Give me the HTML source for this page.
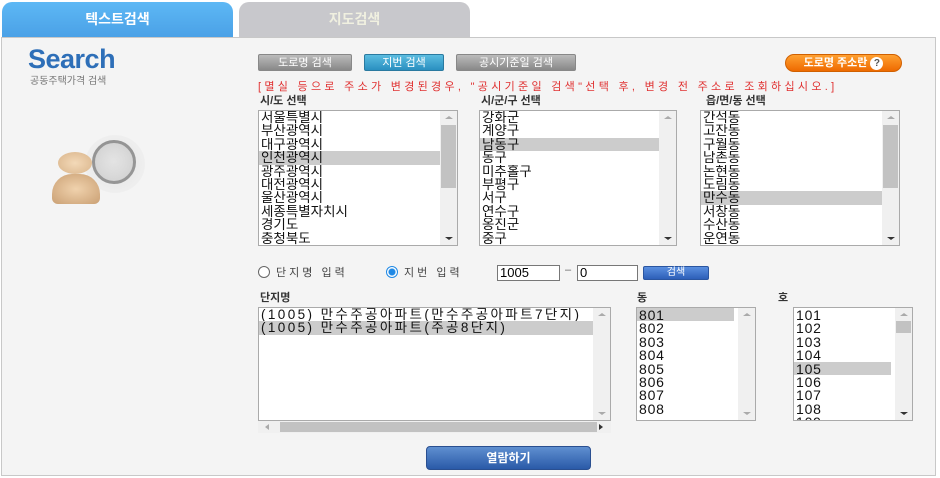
<!DOCTYPE html>
<html><head><meta charset="utf-8"><style>
*{margin:0;padding:0;box-sizing:border-box}
body{width:940px;height:478px;background:#fff;font-family:"Liberation Sans","Noto Sans CJK KR",sans-serif;position:relative;overflow:hidden}
.a{position:absolute}
.tab{position:absolute;top:2px;height:36px;border-radius:10px 10px 0 0;color:#fff;font-weight:bold;font-size:14px;text-align:center;line-height:34px}
.panel{position:absolute;left:1px;top:37px;width:935px;height:439px;background:#f4f4f4;border:1px solid #c8c8c8}
.btn{position:absolute;height:17px;font-size:11px;color:#fff;text-align:center;line-height:16px;border-radius:2px;border:1px solid #888}
.lab{position:absolute;font-size:11px;font-weight:bold;color:#333;line-height:12px}
.list{position:absolute;background:#fff;border:1px solid #aaa;overflow:hidden;font-size:13.5px;color:#111}
.list div.r{height:13.4px;line-height:14px;padding-left:2px;white-space:nowrap;overflow:hidden}
.list .s{background:#ccc}
.num{font-size:14px;letter-spacing:0.8px}
.sb{position:absolute;right:0;top:0;bottom:0;width:17px;background:#f0f0f0}
.th{position:absolute;left:1px;right:1px;background:#c2c2c2}
.up,.dn{position:absolute;left:5px;width:0;height:0;border-left:4px solid transparent;border-right:4px solid transparent}
.up{top:5px;border-bottom:3px solid #aaa}
.dn{bottom:5px;border-top:3px solid #aaa}
</style></head><body>
<div class="tab" style="left:2px;width:231px;background:linear-gradient(#5db8f5,#4aa0e6)">텍스트검색</div>
<div class="tab" style="left:239px;width:231px;background:#c8c8cc;color:#f0f0e0">지도검색</div>
<div class="panel"></div>
<div class="a" style="left:28px;top:44px;font-size:27px;font-weight:900;color:#2e6fb8;letter-spacing:-0.5px">Search</div>
<div class="a" style="left:30px;top:72px;font-size:10px;color:#777">공동주택가격 검색</div>
<div class="a" style="left:92px;top:140px;width:44px;height:44px;border-radius:50%;border:3px solid #888;background:radial-gradient(#f4f4f4,#ccc)"></div>
<div class="a" style="left:85px;top:135px;width:60px;height:58px;border-radius:50%;background:radial-gradient(rgba(200,200,200,0.4),rgba(244,244,244,0))"></div>
<div class="a" style="left:58px;top:152px;width:34px;height:22px;border-radius:50%;background:radial-gradient(#f3d9b8,#d9b48a)"></div>
<div class="a" style="left:52px;top:174px;width:48px;height:30px;border-radius:20px 20px 6px 6px;background:radial-gradient(#f0d2ad,#caa074)"></div>
<div class="btn" style="left:258px;top:54px;width:94px;background:linear-gradient(#bbb,#888)">도로명 검색</div>
<div class="btn" style="left:364px;top:54px;width:80px;background:linear-gradient(#5bbce0,#2a8fc0);border-color:#2a7aa0">지번 검색</div>
<div class="btn" style="left:456px;top:54px;width:120px;background:linear-gradient(#bbb,#888)">공시기준일 검색</div>
<div class="btn" style="left:785px;top:54px;width:117px;height:18px;border-radius:9px;background:linear-gradient(#ffa030,#ee6a00);border-color:#d06000;font-weight:bold">도로명 주소란 <span style="display:inline-block;width:13px;height:13px;border-radius:50%;background:#fff;color:#555;line-height:13px;font-size:10px">?</span></div>
<div class="a" style="left:258px;top:78px;font-size:11px;color:#e03030;letter-spacing:3.3px;white-space:nowrap">[멸실 등으로 주소가 변경된경우, "공시기준일 검색"선택 후, 변경 전 주소로 조회하십시오.]</div>
<div class="lab" style="left:260px;top:95px">시/도 선택</div>
<div class="lab" style="left:481px;top:95px">시/군/구 선택</div>
<div class="lab" style="left:706px;top:95px">읍/면/동 선택</div>
<div class="list" style="left:258px;top:110px;width:200px;height:136px"><div class="r">서울특별시</div><div class="r">부산광역시</div><div class="r">대구광역시</div><div class="r s" style="margin-right:17px">인천광역시</div><div class="r">광주광역시</div><div class="r">대전광역시</div><div class="r">울산광역시</div><div class="r">세종특별자치시</div><div class="r">경기도</div><div class="r">충청북도</div>
<div class="sb"><div class="up"></div><div class="th" style="top:14px;height:63px"></div><div class="dn" style="border-top-color:#333"></div></div></div>
<div class="list" style="left:479px;top:110px;width:198px;height:136px"><div class="r">강화군</div><div class="r">계양구</div><div class="r s" style="margin-right:17px">남동구</div><div class="r">동구</div><div class="r">미추홀구</div><div class="r">부평구</div><div class="r">서구</div><div class="r">연수구</div><div class="r">옹진군</div><div class="r">중구</div>
<div class="sb"><div class="up"></div><div class="dn" style="border-top-color:#333"></div></div></div>
<div class="list" style="left:700px;top:110px;width:200px;height:136px"><div class="r">간석동</div><div class="r">고잔동</div><div class="r">구월동</div><div class="r">남촌동</div><div class="r">논현동</div><div class="r">도림동</div><div class="r s" style="margin-right:17px">만수동</div><div class="r">서창동</div><div class="r">수산동</div><div class="r">운연동</div>
<div class="sb"><div class="up"></div><div class="th" style="top:14px;height:63px"></div><div class="dn" style="border-top-color:#333"></div></div></div>
<div class="a" style="left:258px;top:264px;font-size:11px;color:#444;letter-spacing:3px;white-space:nowrap"><span style="display:inline-block;width:12px;height:12px;border:1px solid #666;border-radius:50%;vertical-align:-2px;background:#fff"></span> 단지명 입력</div>
<div class="a" style="left:386px;top:264px;font-size:11px;color:#444;letter-spacing:3px;white-space:nowrap"><span style="display:inline-block;width:12px;height:12px;border:1px solid #1e88e5;border-radius:50%;vertical-align:-2px;background:radial-gradient(#1e88e5 3px,#fff 4px)"></span> 지번 입력</div>
<div class="a" style="left:497px;top:265px;width:63px;height:16px;border:1px solid #777;background:#fff;font-size:13px;line-height:14px;padding-left:2px">1005</div>
<div class="a" style="left:565px;top:264px;font-size:11px;color:#666">–</div>
<div class="a" style="left:577px;top:265px;width:61px;height:16px;border:1px solid #777;background:#fff;font-size:13px;line-height:14px;padding-left:2px">0</div>
<div class="btn" style="left:643px;top:266px;width:66px;height:14px;line-height:12px;font-size:10px;background:linear-gradient(#5a8fe0,#2d5fb8);border-color:#2a55a0">검색</div>
<div class="lab" style="left:260px;top:292px">단지명</div>
<div class="lab" style="left:637px;top:292px">동</div>
<div class="lab" style="left:778px;top:292px">호</div>
<div class="list" style="left:258px;top:307px;width:353px;height:114px;font-size:13.5px;letter-spacing:2.4px"><div class="r">(1005) 만수주공아파트(만수주공아파트7단지)</div><div class="r s" style="margin-right:17px">(1005) 만수주공아파트(주공8단지)</div>
<div class="sb"><div class="up"></div><div class="dn"></div></div></div>
<div class="a" style="left:258px;top:421px;width:353px;height:12px;background:#f0f0f0"><div class="a" style="left:22px;top:1px;width:317px;height:10px;background:#c2c2c2"></div><div class="a" style="left:7px;top:3px;border-right:4px solid #aaa;border-top:3px solid transparent;border-bottom:3px solid transparent"></div><div class="a" style="right:8px;top:3px;border-left:4px solid #333;border-top:3px solid transparent;border-bottom:3px solid transparent"></div></div>
<div class="list num" style="left:636px;top:307px;width:120px;height:114px"><div class="r s" style="margin-right:21px">801</div><div class="r">802</div><div class="r">803</div><div class="r">804</div><div class="r">805</div><div class="r">806</div><div class="r">807</div><div class="r">808</div>
<div class="sb"><div class="up"></div><div class="dn"></div></div></div>
<div class="list num" style="left:793px;top:307px;width:120px;height:114px"><div class="r">101</div><div class="r">102</div><div class="r">103</div><div class="r">104</div><div class="r s" style="margin-right:21px">105</div><div class="r">106</div><div class="r">107</div><div class="r">108</div><div class="r">109</div><div class="r">110</div>
<div class="sb"><div class="up"></div><div class="th" style="top:13px;height:12px"></div><div class="dn" style="border-top-color:#333"></div></div></div>
<div class="a" style="left:426px;top:446px;width:165px;height:24px;border-radius:4px;background:linear-gradient(#5f8fd0,#2a5aa8);border:1px solid #2a4f90;color:#fff;font-weight:bold;font-size:12px;text-align:center;line-height:22px">열람하기</div>
</body></html>
